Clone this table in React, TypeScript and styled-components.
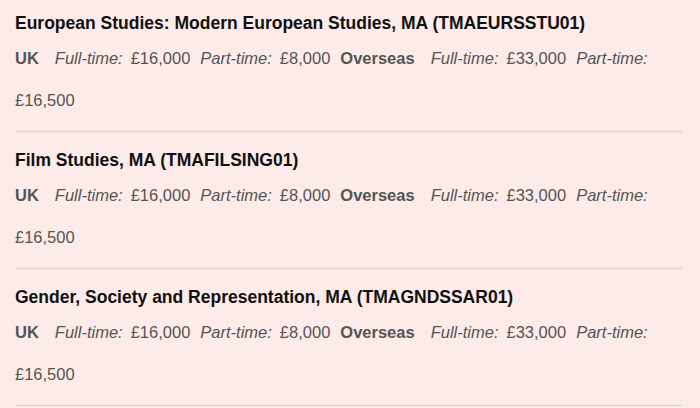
import React from 'react';
import styled, { createGlobalStyle } from 'styled-components';

const GlobalStyle = createGlobalStyle`
  html, body {
    margin: 0;
    padding: 0;
    background-color: #fcebe8;
  }
  body {
    font-family: "Liberation Sans", Arial, sans-serif;
  }
`;

const List = styled.div`
  width: 667px;
  padding: 8px 0 0 15px;
`;

const Course = styled.div`
  border-bottom: 1px solid #d6d2d1;
  padding: 0 0 10px;
  margin-bottom: 13px;
`;

const Title = styled.h3`
  margin: 0;
  font-size: 17.5px;
  line-height: 30px;
  font-weight: bold;
  color: #111;
`;

const Fees = styled.p`
  margin: -1px 0 0;
  font-size: 16.5px;
  line-height: 42px;
  color: #555;
`;

const Region = styled.strong`
  font-weight: bold;
  margin-right: 16px;
`;

const Mode = styled.em`
  font-style: italic;
  margin-right: 8px;
`;

const Amount = styled.span`
  margin-right: 10px;
`;

type CourseItem = { title: string };

const courses: CourseItem[] = [
  { title: 'European Studies: Modern European Studies, MA (TMAEURSSTU01)' },
  { title: 'Film Studies, MA (TMAFILSING01)' },
  { title: 'Gender, Society and Representation, MA (TMAGNDSSAR01)' },
];

const App = () => (
  <>
    <GlobalStyle />
    <List>
      {courses.map(c => (
        <Course key={c.title}>
          <Title>{c.title}</Title>
          <Fees>
            <Region>UK</Region>
            <Mode>Full-time:</Mode><Amount>£16,000</Amount>
            <Mode>Part-time:</Mode><Amount>£8,000</Amount>
            <Region>Overseas</Region>
            <Mode>Full-time:</Mode><Amount>£33,000</Amount>
            <Mode>Part-time:</Mode><Amount>£16,500</Amount>
          </Fees>
        </Course>
      ))}
    </List>
  </>
);

export default App;
